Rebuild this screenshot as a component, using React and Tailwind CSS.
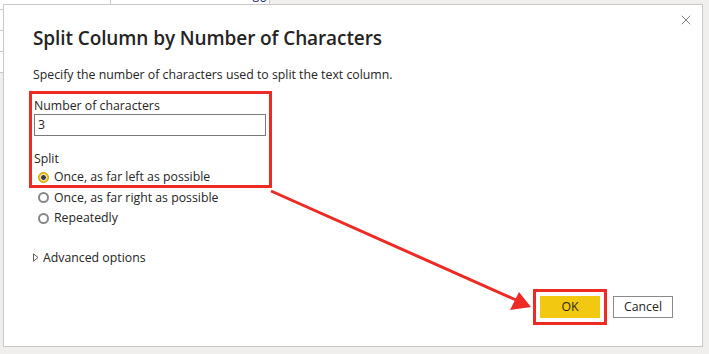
import { X } from 'lucide-react'

const FONT = { fontFamily: '"Open Sans", "Noto Sans", sans-serif' }

function Radio({ checked, label }) {
  return (
    <label className="flex items-center gap-[5px] h-[20.5px] pl-[5px]">
      {checked ? (
        <span className="w-[11px] h-[11px] rounded-full border border-[#c9a100] bg-[#f2c811] flex items-center justify-center">
          <span className="w-[5px] h-[5px] rounded-full bg-[#3b3a39] border border-white box-content" />
        </span>
      ) : (
        <span className="w-[11px] h-[11px] rounded-full border-2 border-[#8a8886] bg-white" />
      )}
      <span>{label}</span>
    </label>
  )
}

function Backdrop() {
  return (
    <div className="absolute inset-0 bg-[#f0efed]">
      <div className="absolute left-0 top-0 w-[270px] h-[4px] bg-white border-r border-[#c8c8c8]" />
      <div className="absolute left-[110px] top-0 w-px h-[4px] bg-[#c8c8c8]" />
      <div className="absolute left-[252px] top-[-9px] text-[13px] leading-none text-[#1e3a6e]">80</div>
      <div className="absolute left-0 top-0 w-[3px] h-[73px] bg-white flex flex-col">
        <div className="h-[10px] border-b border-[#c8c8c8]" />
        <div className="h-[21px] border-b border-[#c8c8c8]" />
        <div className="h-[21px] border-b border-[#c8c8c8]" />
        <div className="h-[21px] border-b border-[#c8c8c8]" />
      </div>
    </div>
  )
}

export default function App() {
  return (
    <div className="relative w-[709px] h-[354px] overflow-hidden text-[#252423]" style={FONT}>
      <Backdrop />
      <div className="absolute left-[3px] top-[4px] w-[700px] h-[343px] bg-white border border-[#c8c8c8] flex flex-col">
        <button className="absolute right-[8px] top-[7px] text-[#605e5c]">
          <X size={16} strokeWidth={1.2} />
        </button>
        <h1 className="ml-[29px] mt-[20px] text-[19px] font-semibold leading-[26px] tracking-[-0.1px] text-[#252423]">
          Split Column by Number of Characters
        </h1>
        <p className="ml-[29px] mt-[15px] text-[12.3px] leading-[18px]">
          Specify the number of characters used to split the text column.
        </p>
        <div className="ml-[25px] mt-[7px] w-[243px] h-[97px] border-[3px] border-[#ee2a24] pl-[2px] text-[12.3px]">
          <div className="leading-[18px] mt-[3px]">Number of characters</div>
          <div className="mt-[-1px] w-[232px] h-[22px] border border-[#7a7a7a] px-[3px] flex items-center">3</div>
          <div className="mt-[14px] leading-[18px]">Split</div>
        </div>
        <div className="ml-[29px] mt-[-21px] text-[12.3px] leading-[20px]">
          <Radio checked label="Once, as far left as possible" />
          <Radio label="Once, as far right as possible" />
          <Radio label="Repeatedly" />
        </div>
        <div className="ml-[29px] mt-[20px] flex items-center gap-[4px] text-[12.3px] leading-[18px]">
          <svg width="6" height="9" viewBox="0 0 6 9"><path d="M0.5 0.8 L5 4.5 L0.5 8.2 Z" fill="none" stroke="#605e5c" strokeWidth="1" /></svg>
          <span>Advanced options</span>
        </div>
        <div className="mt-auto mb-[21px] mr-[29px] flex justify-end items-center gap-[6px] text-[12.3px]">
          <div className="border-[3px] border-[#ee2a24] p-[4px]">
            <button className="w-[60px] h-[22px] bg-[#f2c811] text-[#252423] flex items-center justify-center">OK</button>
          </div>
          <button className="w-[60px] h-[22px] border border-[#8a8a8a] bg-white flex items-center justify-center">Cancel</button>
        </div>
      </div>
      <svg className="absolute inset-0 pointer-events-none" width="709" height="354">
        <line x1="271" y1="191" x2="516" y2="300" stroke="#ee2a24" strokeWidth="3" />
        <polygon points="531,307 510,310 519,292" fill="#ee2a24" />
      </svg>
    </div>
  )
}
